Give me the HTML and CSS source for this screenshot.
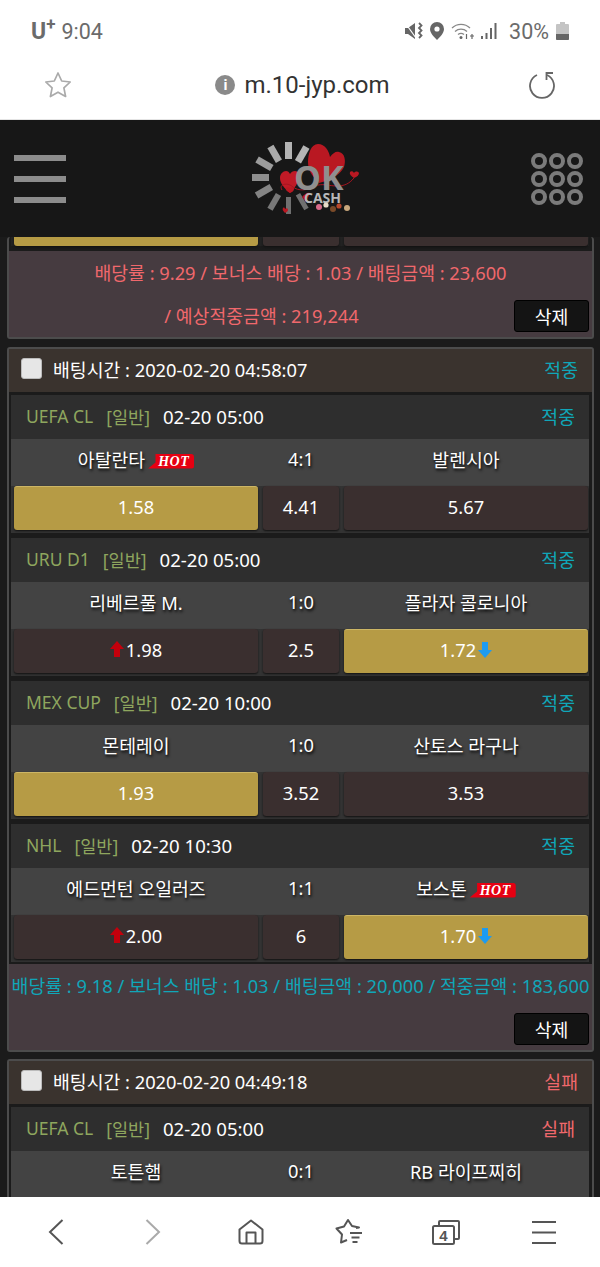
FILE: index.html

```html
<!DOCTYPE html>
<html lang="ko">
<head>
  <meta charset="UTF-8">
  <title>m.10-jyp.com</title>
  <meta name="viewport" content="width=device-width, initial-scale=1.0"/>
  <link rel="stylesheet" href="styles.css">
</head>
<body>
  <div class="status-bar">
    <div class="status-left"><span class="carrier">U<sup>+</sup></span><span class="clock">9:04</span></div>
    <div class="status-right">
      <svg width="18" height="18" viewBox="0 0 18 18"><path d="M0 6h3l7-5v16l-7-5H0z" fill="#666"/><path d="M1 2l10 14" stroke="#fff" stroke-width="1.200"/><path d="M14 1l2.500 2.500L14 6l2.500 2.500L14 11l2.500 2.500L14 16" fill="none" stroke="#666" stroke-width="1.800"/></svg>
      <svg width="14" height="18" viewBox="0 0 14 18"><path d="M7 0a7 7 0 0 1 7 7c0 4-4 8-7 11-3-3-7-7-7-11a7 7 0 0 1 7-7z" fill="#666"/><circle cx="7" cy="7" r="2.600" fill="#fff"/></svg>
      <svg width="23" height="18" viewBox="0 0 23 18"><path d="M1 6a13 13 0 0 1 18 0M4 9.500a9 9 0 0 1 12 0M7 12.500a5 5 0 0 1 6 0" fill="none" stroke="#888" stroke-width="1.300"/><circle cx="10" cy="15.500" r="1.500" fill="#666"/><path d="M15.500 12v5M21 12v5M19 14h4" stroke="#666" stroke-width="1.200" fill="none"/></svg>
      <svg width="16" height="18" viewBox="0 0 16 18"><rect x="0" y="14" width="2" height="3" fill="#666"/><rect x="4.500" y="11" width="2" height="6" fill="#666"/><rect x="9" y="6" width="2" height="11" fill="#666"/><rect x="13.500" y="1" width="2" height="16" fill="#666"/></svg>
      <span class="battery-pct">30%</span>
      <svg width="13" height="18" viewBox="0 0 13 18"><path d="M4 0h5v2h3a1 1 0 0 1 1 1v14a1 1 0 0 1-1 1H1a1 1 0 0 1-1-1V3a1 1 0 0 1 1-1h3z" fill="#c4c4c4"/><path d="M0 12h13v5a1 1 0 0 1-1 1H1a1 1 0 0 1-1-1z" fill="#666"/></svg>
    </div>
  </div>

  <div class="url-bar">
    <svg width="28" height="27" viewBox="0 0 28 27"><path d="M14 2l3.700 8 8.500 1-6.300 5.900 1.700 8.600L14 21.200 6.400 25.500l1.700-8.600L1.800 11l8.500-1z" fill="none" stroke="#aaa" stroke-width="1.700" stroke-linejoin="round"/></svg>
    <div class="url-text">
      <span class="info-dot">i</span>
      <span>m.10-jyp.com</span>
    </div>
    <svg width="28" height="30" viewBox="0 0 28 30"><path d="M9 5A12 12 0 1 0 19 5" fill="none" stroke="#666" stroke-width="1.800"/><path d="M25 3H18.500V10" fill="none" stroke="#666" stroke-width="1.800"/></svg>
  </div>

  <header class="site-head">
    <div class="burger"><i></i><i></i><i></i></div>
    <svg class="logo" width="115" height="78" viewBox="250 140 115 78">
      <g>
        <rect x="285" y="142" width="7" height="17" fill="#b4b4b4"/>
        <rect x="285" y="142" width="7" height="17" fill="#b4b4b4" transform="rotate(30 288 178)"/>
        <rect x="285" y="142" width="7" height="17" fill="#aaa" transform="rotate(-30 288 178)"/>
        <rect x="285" y="142" width="7" height="17" fill="#9c9c9c" transform="rotate(-60 288 178)"/>
        <rect x="285" y="142" width="7" height="17" fill="#8e8e8e" transform="rotate(-90 288 178)"/>
        <rect x="285" y="142" width="7" height="17" fill="#848484" transform="rotate(-120 288 178)"/>
        <rect x="285" y="142" width="6" height="17" fill="#787878" transform="rotate(-150 288 178)"/>
        <rect x="285" y="142" width="5" height="17" fill="#707070" transform="rotate(180 288 178)"/>
        <rect x="285" y="142" width="5" height="17" fill="#707070" transform="rotate(150 288 178)"/>
      </g>
      <path d="M319 183c-8-8-11-14-11-21 0-8 3-18 10-18s11 7 12 13c3-4 6-6 9-5 6 1 7 9 5 15-3 6-10 12-25 16z" fill="#b91822"/>
      <path d="M290 193c-6-5-10-10-10-15 0-4 3-7 6-7 2 0 3 1 4 3 1-2 3-3 5-3 3 0 5 3 4 7-1 5-4 10-9 15z" fill="#c01a26"/>
      <path d="M302 197c3-3 5-5 8-4l-4 9z" fill="#b91822"/>
      <path d="M282 190c-4-6 6-8 11-3 5 4 14 4 22-1 7-3 14 0 22 0 7 0 12-2 17-8" fill="none" stroke="#a51520" stroke-width="1"/>
      <path d="M354 178c-3-2-5-4-4-6 1-1 3-1 4 1 1-2 4-2 5 0 0 2-2 4-5 5z" fill="#b91822"/>
      <path d="M290 193c-3-2-5-3-4-5 1-1 3-1 4 0 1-1 4-1 4 1 0 2-2 3-4 4z" fill="#b91822"/>
      <path d="M285 213c-2-2-3-4-2-5 1-1 2 0 2 1 1-1 3-1 3 1 0 1-1 2-3 3z" fill="#b91822"/>
      <text class="logo-ok" x="294" y="190">OK</text>
      <text class="logo-cash" x="304" y="203">CASH</text>
      <circle cx="319" cy="207" r="3" fill="#d86a8a"/>
      <circle cx="326" cy="205" r="2.600" fill="#e8dcc8"/>
      <circle cx="333" cy="209" r="3" fill="#7a4a28"/>
      <circle cx="339" cy="206" r="2.600" fill="#b8482c"/>
      <circle cx="347" cy="208" r="3" fill="#c8a77c"/>
    </svg>
    <div class="dots"><i></i><i></i><i></i><i></i><i></i><i></i><i></i><i></i><i></i></div>
  </header>

  <main class="content">
    <section class="bet cut">
      <div class="bet-list">
        <div class="odds">
          <div class="odd picked"></div>
          <div class="odd"></div>
          <div class="odd"></div>
        </div>
      </div>
      <div class="bet-foot lost">
        <p>배당률 : 9.29 / 보너스 배당 : 1.03 / 배팅금액 : 23,600</p>
        <div class="foot-row"><span>/ 예상적중금액 : 219,244</span><button class="del">삭제</button></div>
      </div>
    </section>

    <section class="bet">
      <div class="bet-head">
        <span class="check"></span>
        <span class="bet-time">배팅시간 : 2020-02-20 04:58:07</span>
        <span class="win">적중</span>
      </div>
      <div class="bet-list">
        <div class="match">
          <div class="match-head">
            <span class="league">UEFA CL</span><span class="league">[일반]</span><span class="kick">02-20 05:00</span>
            <span class="win">적중</span>
          </div>
          <div class="teams">
            <div>아탈란타<span class="hot">HOT</span></div>
            <div>4:1</div>
            <div>발렌시아</div>
          </div>
          <div class="odds">
            <div class="odd picked">1.58</div>
            <div class="odd">4.41</div>
            <div class="odd">5.67</div>
          </div>
        </div>
        <div class="match">
          <div class="match-head">
            <span class="league">URU D1</span><span class="league">[일반]</span><span class="kick">02-20 05:00</span>
            <span class="win">적중</span>
          </div>
          <div class="teams">
            <div>리베르풀 M.</div>
            <div>1:0</div>
            <div>플라자 콜로니아</div>
          </div>
          <div class="odds">
            <div class="odd"><svg class="arrow" viewBox="0 0 14 16"><path d="M7 0l7 8H10v8H4V8H0z" fill="#c4000c"/></svg>1.98</div>
            <div class="odd">2.5</div>
            <div class="odd picked">1.72<svg class="arrow" viewBox="0 0 14 16"><path d="M7 16L0 8h4V0h6v8h4z" fill="#1d9bf0"/></svg></div>
          </div>
        </div>
        <div class="match">
          <div class="match-head">
            <span class="league">MEX CUP</span><span class="league">[일반]</span><span class="kick">02-20 10:00</span>
            <span class="win">적중</span>
          </div>
          <div class="teams">
            <div>몬테레이</div>
            <div>1:0</div>
            <div>산토스 라구나</div>
          </div>
          <div class="odds">
            <div class="odd picked">1.93</div>
            <div class="odd">3.52</div>
            <div class="odd">3.53</div>
          </div>
        </div>
        <div class="match">
          <div class="match-head">
            <span class="league">NHL</span><span class="league">[일반]</span><span class="kick">02-20 10:30</span>
            <span class="win">적중</span>
          </div>
          <div class="teams">
            <div>에드먼턴 오일러즈</div>
            <div>1:1</div>
            <div>보스톤<span class="hot">HOT</span></div>
          </div>
          <div class="odds">
            <div class="odd"><svg class="arrow" viewBox="0 0 14 16"><path d="M7 0l7 8H10v8H4V8H0z" fill="#c4000c"/></svg>2.00</div>
            <div class="odd">6</div>
            <div class="odd picked">1.70<svg class="arrow" viewBox="0 0 14 16"><path d="M7 16L0 8h4V0h6v8h4z" fill="#1d9bf0"/></svg></div>
          </div>
        </div>
      </div>
      <div class="bet-foot won">
        <p>배당률 : 9.18 / 보너스 배당 : 1.03 / 배팅금액 : 20,000 / 적중금액 : 183,600</p>
        <div class="foot-row"><span></span><button class="del">삭제</button></div>
      </div>
    </section>

    <section class="bet">
      <div class="bet-head">
        <span class="check"></span>
        <span class="bet-time">배팅시간 : 2020-02-20 04:49:18</span>
        <span class="fail">실패</span>
      </div>
      <div class="bet-list">
        <div class="match">
          <div class="match-head">
            <span class="league">UEFA CL</span><span class="league">[일반]</span><span class="kick">02-20 05:00</span>
            <span class="fail">실패</span>
          </div>
          <div class="teams">
            <div>토튼햄</div>
            <div>0:1</div>
            <div>RB 라이프찌히</div>
          </div>
        </div>
      </div>
    </section>
  </main>

  <nav class="bottom-nav">
    <svg width="16" height="26" viewBox="0 0 16 26"><path d="M14.500 1L2 13l12.500 12" fill="none" stroke="#555" stroke-width="2"/></svg>
    <svg width="16" height="26" viewBox="0 0 16 26"><path d="M1.500 1L14 13 1.500 25" fill="none" stroke="#aaa" stroke-width="2"/></svg>
    <svg width="26" height="26" viewBox="0 0 26 26"><path d="M1.500 10.500L13 1.500l11.500 9V22a2.500 2.500 0 0 1-2.500 2.500H4A2.500 2.500 0 0 1 1.500 22z M8.500 24.500V13.500h9v11" fill="none" stroke="#555" stroke-width="2" stroke-linejoin="round"/></svg>
    <svg width="28" height="26" viewBox="0 0 28 26"><path d="M21 9l3-.500-7-1.500-4-6-4 6.500-7.500 2 5.500 6-1 8 6-2.500" fill="none" stroke="#555" stroke-width="2" stroke-linejoin="round"/><path d="M15 14h12M16.500 18.500h8M17.500 23h5" stroke="#555" stroke-width="2"/></svg>
    <svg width="28" height="25" viewBox="0 0 28 25"><path d="M7 6V2a1 1 0 0 1 1-1h18a1 1 0 0 1 1 1v16a1 1 0 0 1-1 1h-4" fill="none" stroke="#555" stroke-width="2"/><rect x="1" y="6" width="21" height="18" rx="1.500" fill="#fff" stroke="#555" stroke-width="2"/><text class="tab-count" x="11.500" y="20.500">4</text></svg>
    <svg width="24" height="24" viewBox="0 0 24 24"><path d="M0 2h24M0 12.500h24M0 23h24" stroke="#555" stroke-width="2"/></svg>
  </nav>
</body>
</html>
```

FILE: styles.css

```css
* {
  box-sizing: border-box;
}
html, body {
  margin: 0;
  padding: 0;
}
body {
  width: 600px;
  height: 1267px;
  overflow: hidden;
  display: flex;
  flex-direction: column;
  background-color: #1b1b1b;
  font-family: "Noto Sans", "Noto Sans CJK KR", sans-serif;
  font-size: 18.3px;
  color: #fff;
}

/* phone chrome */
.status-bar {
  height: 60px;
  flex: none;
  background-color: #fff;
  color: #6b6b6b;
  font-family: Roboto, sans-serif;
  display: flex;
  align-items: center;
  justify-content: space-between;
  padding: 2px 31px 0 31px;
}
.status-left {
  display: flex;
  align-items: center;
  gap: 6px;
  font-size: 21.5px;
}
.carrier {
  font-weight: 700;
  font-size: 23px;
}
.carrier sup {
  font-size: 17px;
  line-height: 0;
}
.status-right {
  display: flex;
  align-items: center;
  gap: 7px;
}
.battery-pct {
  font-size: 21.5px;
  margin-left: 5px;
}
.url-bar {
  height: 60px;
  flex: none;
  background-color: #fff;
  border-bottom: 1px solid #e4e4e4;
  color: #333;
  display: flex;
  align-items: center;
  justify-content: space-between;
  padding: 0 44px 10px 44px;
}
.url-text {
  display: flex;
  align-items: center;
  gap: 9px;
  margin-left: 5px;
  font-family: Roboto, sans-serif;
  font-size: 24px;
}
.info-dot {
  width: 20px;
  height: 20px;
  border-radius: 50%;
  background-color: #8a8a8a;
  color: #fff;
  font-size: 15px;
  font-weight: 700;
  text-align: center;
  line-height: 20px;
}
.bottom-nav {
  height: 70px;
  flex: none;
  background-color: #fff;
  display: grid;
  grid-template-columns: repeat(6, 1fr);
  align-items: center;
  justify-items: center;
  padding: 0 7px;
}
.tab-count {
  font-family: "Liberation Sans", sans-serif;
  font-size: 15px;
  font-weight: 700;
  fill: #555;
  text-anchor: middle;
}

/* site header */
.site-head {
  height: 117px;
  flex: none;
  background-color: #171717;
  display: flex;
  align-items: center;
  justify-content: space-between;
  padding: 0 17px 0 14px;
}
.burger {
  width: 52px;
  display: flex;
  flex-direction: column;
  gap: 15px;
}
.burger i {
  display: block;
  height: 6px;
  background-color: #8c8c8c;
}
.logo {
  margin-left: 18px;
}
.logo-ok {
  font-family: "Open Sans", sans-serif;
  font-size: 34px;
  font-weight: 700;
  fill: #8f8f8f;
}
.logo-cash {
  font-family: "Open Sans", sans-serif;
  font-size: 14px;
  font-weight: 700;
  fill: #b8b8b8;
}
.dots {
  width: 52px;
  display: grid;
  grid-template-columns: repeat(3, 16px);
  justify-content: space-between;
  row-gap: 2px;
}
.dots i {
  display: block;
  height: 16px;
  border: 4px solid #7b7b7b;
  border-radius: 50%;
}

/* bet list */
.content {
  flex: 1;
  min-height: 0;
  overflow: hidden;
  padding: 0 6px 0 7px;
}
.bet {
  border: 2px solid #4c4c4c;
  border-radius: 3px;
  margin-bottom: 7px;
}
.bet.cut {
  border-top: 0;
  margin-bottom: 8px;
}
.bet-head {
  height: 43px;
  background-color: #3a332e;
  display: flex;
  align-items: center;
  padding: 0 14px 4px 12px;
}
.check {
  width: 21px;
  height: 21px;
  border-radius: 3px;
  background-color: #e6e6e6;
  border: 1px solid #bbb;
  margin-right: 11px;
}
.bet-time {
  flex: 1;
}
.win {
  color: #10a6b8;
}
.fail {
  color: #f0686c;
}
.bet-list {
  padding: 3px 3px 2px 2px;
}
.cut .bet-list {
  padding: 0 3px 5px 2px;
}
.match {
  background-color: #262626;
  margin-bottom: 5px;
}
.match:last-child {
  margin-bottom: 0;
}
.match-head {
  height: 44px;
  background-color: #2e2e2e;
  display: flex;
  align-items: center;
  gap: 13px;
  padding: 0 14px 2px 15px;
}
.league {
  color: #8ea65e;
  font-size: 17.5px;
}
.kick {
  flex: 1;
  font-size: 18.6px;
}
.teams, .odds {
  display: grid;
  grid-template-columns: 1fr 76px 1fr;
  column-gap: 5px;
  padding: 0 1px 0 3px;
}
.teams {
  height: 47px;
  padding-bottom: 8px;
  background-color: #434343;
  align-items: center;
  text-align: center;
  text-shadow: 1px 2px 3px #000;
}
.odds {
  height: 47px;
  padding-bottom: 3px;
  background-color: #333;
}
.cut .odds {
  height: 9px;
  padding-bottom: 0;
  background-color: #222;
}
.odd {
  display: flex;
  align-items: center;
  justify-content: center;
  gap: 2px;
  padding-bottom: 4px;
  background-color: #3a2f2f;
  border-radius: 3px;
  box-shadow: 0 1px 2px #111;
}
.odd.picked {
  background-color: #b69b45;
  border-top: 1px solid #cdb665;
}
.cut .odd {
  padding-bottom: 0;
  border-radius: 0 0 3px 3px;
  border-top: 0;
}
.arrow {
  width: 14px;
  height: 16px;
}
.hot {
  display: inline-block;
  width: 46px;
  height: 15px;
  margin-left: 3px;
  padding-left: 10px;
  background-color: #e60012;
  border-radius: 0 3px 3px 0;
  clip-path: polygon(16% 0, 100% 0, 100% 100%, 0 100%, 16% 60%);
  font-family: "Liberation Serif", serif;
  font-size: 14px;
  font-weight: 700;
  font-style: italic;
  line-height: 15px;
  letter-spacing: 0.5px;
  text-align: left;
  text-shadow: none;
  vertical-align: 1px;
}
.bet-foot {
  background-color: #463b40;
  text-align: center;
  white-space: nowrap;
}
.bet-foot p {
  margin: 0;
  height: 43px;
  line-height: 43px;
}
.bet-foot.lost {
  color: #f0686c;
}
.bet-foot.won {
  color: #10a6b8;
}
.foot-row {
  height: 43px;
  display: flex;
  align-items: center;
  padding-right: 3px;
}
.foot-row span {
  flex: 1;
  margin-bottom: 2px;
}
.del {
  width: 75px;
  height: 32px;
  background-color: #141414;
  color: #fff;
  border: 1px solid #000;
  border-radius: 3px;
  font-family: inherit;
  font-size: 18.3px;
  padding: 0;
}
```
